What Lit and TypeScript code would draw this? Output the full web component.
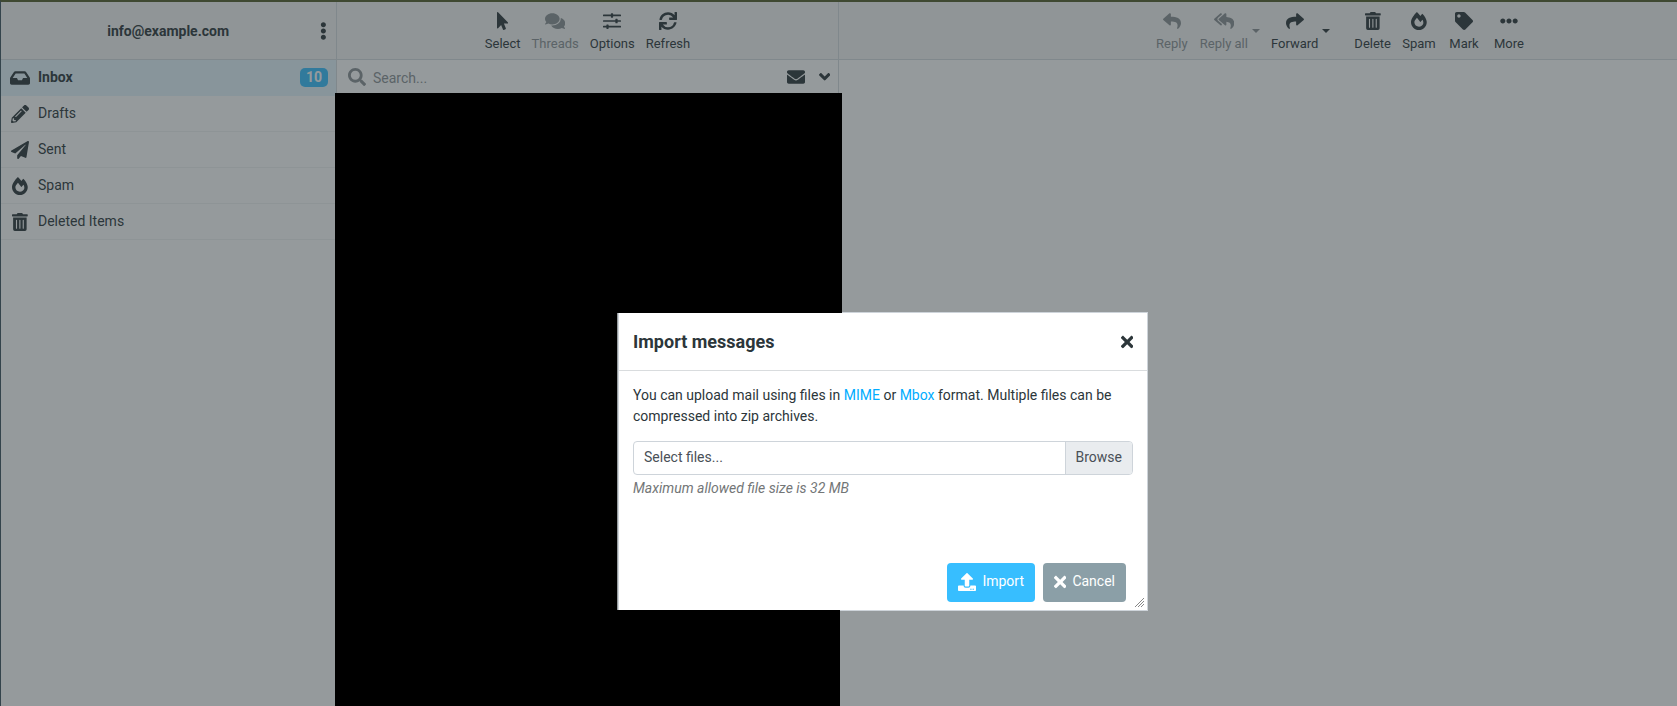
import { LitElement, html, css, svg } from "lit";
import { customElement, property, state } from "lit/decorators.js";
import { classMap } from "lit/directives/class-map.js";

interface Glyph {
  width: number;
  path: string;
}

const GLYPHS: Record<string, Glyph> = {
  pointer: {
    width: 320,
    path: "M302.189 329.126H196.105l55.831 135.993c3.889 9.428-.555 19.999-9.444 23.999l-49.165 21.427c-9.165 4-19.443-.571-23.332-9.714l-53.053-129.136-86.664 89.138C18.729 472.71 0 463.554 0 447.977V18.299C0 1.899 19.921-6.096 30.277 5.443l284.412 292.542c11.472 11.179 3.007 31.141-12.5 31.141z",
  },
  comments: {
    width: 576,
    path: "M416 192c0-88.4-93.1-160-208-160S0 103.6 0 192c0 34.3 14.1 65.9 38 92-13.4 30.2-35.5 54.2-35.8 54.5-2.2 2.3-2.8 5.7-1.5 8.7S4.8 352 8 352c36.6 0 66.9-12.3 88.7-25 32.2 15.7 70.3 25 111.3 25 114.9 0 208-71.6 208-160zm122 220c23.9-26 38-57.7 38-92 0-66.9-53.5-124.2-129.3-148.1.9 6.6 1.3 13.3 1.3 20.1 0 105.9-107.7 192-240 192-10.8 0-21.3-.8-31.7-1.9C207.8 439.6 281.8 480 368 480c41 0 79.1-9.2 111.3-25 21.8 12.7 52.1 25 88.7 25 3.2 0 6.1-1.9 7.3-4.8 1.3-2.9.7-6.3-1.5-8.7-.3-.3-22.4-24.2-35.8-54.5z",
  },
  sliders: {
    width: 512,
    path: "M16 72h208V48c0-9 7-16 16-16h32c9 0 16 7 16 16v24h208c9 0 16 7 16 16v16c0 9-7 16-16 16H288v24c0 9-7 16-16 16h-32c-9 0-16-7-16-16v-24H16c-9 0-16-7-16-16V88c0-9 7-16 16-16zM16 232h336v-24c0-9 7-16 16-16h32c9 0 16 7 16 16v24h80c9 0 16 7 16 16v16c0 9-7 16-16 16h-80v24c0 9-7 16-16 16h-32c-9 0-16-7-16-16v-24H16c-9 0-16-7-16-16v-16c0-9 7-16 16-16zM16 392h80v-24c0-9 7-16 16-16h32c9 0 16 7 16 16v24h336c9 0 16 7 16 16v16c0 9-7 16-16 16H160v24c0 9-7 16-16 16h-32c-9 0-16-7-16-16v-24H16c-9 0-16-7-16-16v-16c0-9 7-16 16-16z",
  },
  sync: {
    width: 512,
    path: "M440.65 12.57l4 82.77A247.16 247.16 0 0 0 255.83 8C134.73 8 33.91 94.92 12.29 209.82A12 12 0 0 0 24.09 224h49.05a12 12 0 0 0 11.67-9.26 175.91 175.91 0 0 1 317-56.94l-101.46-4.86a12 12 0 0 0-12.57 12v47.41a12 12 0 0 0 12 12H500a12 12 0 0 0 12-12V12a12 12 0 0 0-12-12h-47.37a12 12 0 0 0-11.98 12.57zM255.83 432a175.61 175.61 0 0 1-146-77.8l101.8 4.87a12 12 0 0 0 12.57-12v-47.4a12 12 0 0 0-12-12H12a12 12 0 0 0-12 12V500a12 12 0 0 0 12 12h47.35a12 12 0 0 0 12-12.6l-4.15-82.57A247.17 247.17 0 0 0 255.83 504c121.11 0 221.93-86.92 243.55-201.82a12 12 0 0 0-11.8-14.18h-49.05a12 12 0 0 0-11.67 9.26A175.86 175.86 0 0 1 255.83 432z",
  },
  inbox: {
    width: 576,
    path: "M567.938 243.908L462.25 85.374A48.003 48.003 0 0 0 422.311 64H153.689a48 48 0 0 0-39.938 21.374L8.062 243.908A47.994 47.994 0 0 0 0 270.533V400c0 26.51 21.49 48 48 48h480c26.51 0 48-21.49 48-48V270.533a47.994 47.994 0 0 0-8.062-26.625zM162.252 128h251.497l85.333 128H376l-32 64H232l-32-64H76.918l85.334-128z",
  },
  pencil: {
    width: 512,
    path: "M497.9 142.1l-46.1 46.1c-4.7 4.7-12.3 4.7-17 0l-111-111c-4.7-4.7-4.7-12.3 0-17l46.1-46.1c18.7-18.7 49.1-18.7 67.9 0l60.1 60.1c18.8 18.7 18.8 49.1 0 67.9zM284.2 99.8L21.6 362.4.4 483.9c-2.9 16.4 11.4 30.6 27.8 27.8l121.5-21.3 262.6-262.6c4.7-4.7 4.7-12.3 0-17l-111-111c-4.8-4.7-12.4-4.7-17.1 0zM124.1 339.9c-5.5-5.5-5.5-14.3 0-19.8l154-154c5.5-5.5 14.3-5.5 19.8 0s5.5 14.3 0 19.8l-154 154c-5.5 5.5-14.3 5.5-19.8 0zM88 424h48v36.3l-64.5 11.3-31.1-31.1L51.7 376H88v48z",
  },
  plane: {
    width: 512,
    path: "M476 3.2L12.5 270.6c-18.1 10.4-15.8 35.6 2.2 43.2L121 358.4l287.3-253.2c5.5-4.9 13.3 2.6 8.6 8.3L176 407v80.5c0 23.6 28.5 32.9 42.5 15.8L282 426l124.6 52.2c14.2 6 30.4-2.9 33-18.2l72-432C515 7.8 493.3-6.8 476 3.2z",
  },
  fire: {
    width: 448,
    path: "M323.56 51.2c-20.8 19.3-39.58 39.59-56.22 59.97C240.08 73.62 206.28 35.53 168 0 69.74 91.17 0 209.96 0 281.6 0 408.85 100.29 512 224 512s224-103.15 224-230.4c0-53.27-51.98-163.14-124.44-230.4zm-19.47 340.65C282.43 407.01 255.72 416 226.86 416 154.71 416 96 368.26 96 290.75c0-38.61 24.31-72.63 72.79-130.75 6.93 7.98 98.83 125.34 98.83 125.34l58.63-66.88c4.14 6.85 7.91 13.55 11.27 19.97 27.35 52.19 15.81 118.97-33.43 153.42z",
  },
  trash: {
    width: 448,
    path: "M32 464a48 48 0 0 0 48 48h288a48 48 0 0 0 48-48V128H32zm272-256a16 16 0 0 1 32 0v224a16 16 0 0 1-32 0zm-96 0a16 16 0 0 1 32 0v224a16 16 0 0 1-32 0zm-96 0a16 16 0 0 1 32 0v224a16 16 0 0 1-32 0zM432 32H312l-9.4-18.7A24 24 0 0 0 281.1 0H166.8a23.72 23.72 0 0 0-21.4 13.3L136 32H16A16 16 0 0 0 0 48v32a16 16 0 0 0 16 16h416a16 16 0 0 0 16-16V48a16 16 0 0 0-16-16z",
  },
  search: {
    width: 512,
    path: "M505 442.7L405.3 343c-4.5-4.5-10.6-7-17-7H372c27.6-35.3 44-79.7 44-128C416 93.1 322.9 0 208 0S0 93.1 0 208s93.1 208 208 208c48.3 0 92.7-16.4 128-44v16.3c0 6.4 2.5 12.5 7 17l99.7 99.7c9.4 9.4 24.6 9.4 33.9 0l28.3-28.3c9.4-9.4 9.4-24.6.1-34zM208 336c-70.7 0-128-57.2-128-128 0-70.7 57.2-128 128-128 70.7 0 128 57.2 128 128 0 70.7-57.2 128-128 128z",
  },
  envelope: {
    width: 512,
    path: "M502.3 190.8c3.9-3.1 9.7-.2 9.7 4.7V400c0 26.5-21.5 48-48 48H48c-26.5 0-48-21.5-48-48V195.6c0-5 5.7-7.8 9.7-4.7 22.4 17.4 52.1 39.5 154.1 113.6 21.1 15.4 56.7 47.8 92.2 47.6 35.7.3 72-32.8 92.3-47.6 102-74.1 131.6-96.3 154-113.7zM256 320c23.2.4 56.6-29.2 73.4-41.4 132.7-96.3 142.8-104.7 173.4-128.7 5.8-4.5 9.2-11.5 9.2-18.9v-19c0-26.5-21.5-48-48-48H48c-26.5 0-48 21.5-48 48v19c0 7.4 3.4 14.3 9.2 18.9 30.6 23.9 40.7 32.4 173.4 128.7 16.8 12.2 50.2 41.8 73.4 41.4z",
  },
  chevron: {
    width: 448,
    path: "M193 396L10 213c-13-13-13-33 0-46l40-40c13-13 33-13 46 0l128 128 128-128c13-13 33-13 46 0l40 40c13 13 13 33 0 46L255 396c-17 17-45 17-62 0z",
  },
  reply: {
    width: 512,
    path: "M8.309 189.836L184.313 37.851C199.719 24.546 224 35.347 224 56.015v80.053c160.629 1.839 288 34.032 288 186.258 0 61.441-39.581 122.309-83.333 154.132-13.653 9.931-33.111-2.533-28.077-18.631 45.344-145.012-21.507-183.51-176.59-185.742V360c0 20.7-24.3 31.453-39.687 18.164l-176.004-152c-11.071-9.562-11.086-26.753 0-36.328z",
  },
  replyAll: {
    width: 576,
    path: "M136.309 189.836L312.313 37.851C327.72 24.546 352 35.348 352 56.015v82.763c129.182 10.231 224 52.212 224 183.548 0 61.441-39.582 122.309-83.333 154.132-13.653 9.931-33.111-2.533-28.077-18.631 38.512-123.162-3.922-169.482-112.59-182.015v84.175c0 20.701-24.3 31.453-39.687 18.164L136.309 226.164c-11.071-9.561-11.086-26.753 0-36.328zm-128 36.328L184.313 378.15C199.7 391.439 224 380.687 224 359.986v-15.818l-108.606-93.785A55.96 55.96 0 0 1 96 207.998a55.953 55.953 0 0 1 19.393-42.38L224 71.832V56.015c0-20.667-24.28-31.469-39.687-18.164L8.309 189.836c-11.086 9.575-11.071 26.767 0 36.328z",
  },
  forward: {
    width: 512,
    path: "M503.691 189.836L327.687 37.851C312.281 24.546 288 35.347 288 56.015v80.053C127.371 137.907 0 170.1 0 322.326c0 61.441 39.581 122.309 83.333 154.132 13.653 9.931 33.111-2.533 28.077-18.631C66.066 312.814 132.917 274.316 288 272.085V360c0 20.7 24.3 31.453 39.687 18.164l176.004-152c11.071-9.562 11.086-26.753 0-36.328z",
  },
  tag: {
    width: 512,
    path: "M0 252.118V48C0 21.49 21.49 0 48 0h204.118a48 48 0 0 1 33.941 14.059l211.882 211.882c18.745 18.745 18.745 49.137 0 67.882L293.823 497.941c-18.745 18.745-49.137 18.745-67.882 0L14.059 286.059A48 48 0 0 1 0 252.118zM112 64c-26.51 0-48 21.49-48 48s21.49 48 48 48 48-21.49 48-48-21.49-48-48-48z",
  },
  dots: {
    width: 512,
    path: "M328 256c0 39.8-32.2 72-72 72s-72-32.2-72-72 32.2-72 72-72 72 32.2 72 72zm104-72c-39.8 0-72 32.2-72 72s32.2 72 72 72 72-32.2 72-72-32.2-72-72-72zm-352 0c-39.8 0-72 32.2-72 72s32.2 72 72 72 72-32.2 72-72-32.2-72-72-72z",
  },
  dotsVertical: {
    width: 192,
    path: "M96 184c39.8 0 72 32.2 72 72s-32.2 72-72 72-72-32.2-72-72 32.2-72 72-72zM24 80c0 39.8 32.2 72 72 72s72-32.2 72-72S135.8 8 96 8 24 40.2 24 80zm0 352c0 39.8 32.2 72 72 72s72-32.2 72-72-32.2-72-72-72-72 32.2-72 72z",
  },
  upload: {
    width: 512,
    path: "M296 384h-80c-13.3 0-24-10.7-24-24V192h-87.7c-17.8 0-26.7-21.5-14.1-34.1L242.3 5.7c7.5-7.5 19.8-7.5 27.3 0l152.2 152.2c12.6 12.6 3.7 34.1-14.1 34.1H320v168c0 13.3-10.7 24-24 24zm216-8v112c0 13.3-10.7 24-24 24H24c-13.3 0-24-10.7-24-24V376c0-13.3 10.7-24 24-24h136v8c0 30.9 25.1 56 56 56h80c30.9 0 56-25.1 56-56v-8h136c13.3 0 24 10.7 24 24zm-124 88c0-11-9-20-20-20s-20 9-20 20 9 20 20 20 20-9 20-20zm64 0c0-11-9-20-20-20s-20 9-20 20 9 20 20 20 20-9 20-20z",
  },
  times: {
    width: 352,
    path: "M242.72 256l100.07-100.07c12.28-12.28 12.28-32.19 0-44.48l-22.24-22.24c-12.28-12.28-32.19-12.28-44.48 0L176 189.28 75.93 89.21c-12.28-12.28-32.19-12.28-44.48 0L9.21 111.45c-12.28 12.28-12.28 32.19 0 44.48L109.28 256 9.21 356.07c-12.28 12.28-12.28 32.19 0 44.48l22.24 22.24c12.28 12.28 32.2 12.28 44.48 0L176 322.72l100.07 100.07c12.28 12.28 32.2 12.28 44.48 0l22.24-22.24c12.28-12.28 12.28-32.19 0-44.48L242.72 256z",
  },
};

/** Solid glyph that takes its height from font-size and its colour from the text. */
@customElement("mail-icon")
export class MailIcon extends LitElement {
  @property() name = "inbox";

  static styles = css`
    :host {
      display: inline-flex;
      justify-content: center;
      font-size: 18px;
    }
    .glyph {
      display: block;
      height: 1em;
      fill: currentColor;
    }
  `;

  render() {
    const glyph = GLYPHS[this.name];
    return html`<svg class="glyph" viewBox="0 0 ${glyph.width} 512" aria-hidden="true">
      ${svg`<path d=${glyph.path}></path>`}
    </svg>`;
  }
}

interface Action {
  label: string;
  icon: string;
  disabled?: boolean;
  menu?: boolean;
  spaced?: boolean;
}

@customElement("mail-toolbar")
export class MailToolbar extends LitElement {
  @property({ attribute: false }) actions: Action[] = [];

  static styles = css`
    :host {
      display: flex;
      gap: 11px;
    }
    .item {
      display: flex;
      gap: 4px;
    }
    .item.spaced {
      margin-left: 13px;
    }
    button {
      border: 0;
      padding: 0;
      background: none;
      color: #2c363a;
      font: 13px/18px Roboto, sans-serif;
    }
    button:disabled {
      color: #8b9194;
    }
    .action {
      display: flex;
      flex-direction: column;
      align-items: center;
      gap: 5px;
      min-width: 34px;
    }
    .more {
      display: flex;
      padding-top: 17px;
      align-items: flex-start;
    }
    .caret {
      display: block;
      width: 8px;
      height: 4px;
      fill: currentColor;
    }
  `;

  render() {
    return this.actions.map(
      (a) => html`<div class=${classMap({ item: true, spaced: !!a.spaced })}>
        <button class="action" type="button" ?disabled=${!!a.disabled}>
          <mail-icon name=${a.icon}></mail-icon>
          <span>${a.label}</span>
        </button>
        ${a.menu
          ? html`<button class="more" type="button" aria-label="${a.label} options" ?disabled=${!!a.disabled}>
              <svg class="caret" viewBox="0 0 8 4"><path d="M0 0h8L4 4z"></path></svg>
            </button>`
          : null}
      </div>`
    );
  }
}

@customElement("import-dialog")
export class ImportDialog extends LitElement {
  @state() private fileName = "";

  static styles = css`
    :host {
      display: flex;
      flex-direction: column;
      box-sizing: border-box;
      border: 1px solid #ced4da;
      background: #fff;
      color: #2c363a;
      font: 14px/21px Roboto, sans-serif;
    }
    header {
      display: flex;
      align-items: center;
      justify-content: space-between;
      height: 57px;
      padding: 0 14px;
      border-bottom: 1px solid #d9dcde;
    }
    h2 {
      margin: 0;
      font-size: 18px;
      font-weight: 700;
    }
    button {
      display: flex;
      align-items: center;
      border: 0;
      font: inherit;
      color: inherit;
    }
    .close {
      padding: 0;
      background: none;
    }
    .body {
      flex: 1;
      padding: 14px 14px 0;
    }
    p {
      margin: 0 0 14px;
    }
    a {
      color: #00acff;
      text-decoration: none;
    }
    .picker {
      position: relative;
      display: flex;
      height: 32px;
      border: 1px solid #ced4da;
      border-radius: 4px;
      line-height: 31px;
      color: #495057;
      overflow: hidden;
    }
    .picker-name {
      flex: 1;
      padding: 0 10px;
    }
    .picker-browse {
      padding: 0 10px;
      border-left: 1px solid #ced4da;
      background: #e9ecef;
    }
    .picker-input {
      position: absolute;
      inset: 0;
      width: 100%;
      opacity: 0;
    }
    .hint {
      margin-top: 3px;
      font-style: italic;
      color: #737677;
    }
    footer {
      display: flex;
      justify-content: flex-end;
      gap: 8px;
      padding: 0 21px 8px;
    }
    .primary,
    .secondary {
      height: 39px;
      gap: 6px;
      padding: 0 11px 2px;
      border-radius: 4px;
      color: #fff;
    }
    .primary {
      background: #37beff;
    }
    .secondary {
      background: #8b9fa7;
    }
    .grip {
      position: absolute;
      right: 3px;
      bottom: 3px;
      width: 9px;
      height: 9px;
      stroke: #888;
    }
  `;

  private pick(e: Event) {
    this.fileName = (e.target as HTMLInputElement).files?.[0]?.name ?? "";
  }

  render() {
    return html`
      <header>
        <h2>Import messages</h2>
        <button class="close" type="button" aria-label="Close"><mail-icon name="times"></mail-icon></button>
      </header>
      <div class="body">
        <p>
          You can upload mail using files in <a href="#mime">MIME</a> or <a href="#mbox">Mbox</a> format. Multiple files
          can be compressed into zip archives.
        </p>
        <label class="picker">
          <span class="picker-name">${this.fileName || "Select files..."}</span>
          <span class="picker-browse">Browse</span>
          <input class="picker-input" type="file" @change=${this.pick} />
        </label>
        <div class="hint">Maximum allowed file size is 32 MB</div>
      </div>
      <footer>
        <button class="primary" type="button"><mail-icon name="upload"></mail-icon>Import</button>
        <button class="secondary" type="button"><mail-icon name="times"></mail-icon>Cancel</button>
      </footer>
      <svg class="grip" viewBox="0 0 9 9"><path d="M0 9L9 0M3 9L9 3M6 9L9 6"></path></svg>
    `;
  }
}

const FOLDERS = [
  { label: "Inbox", icon: "inbox", unread: 10 },
  { label: "Drafts", icon: "pencil", unread: 0 },
  { label: "Sent", icon: "plane", unread: 0 },
  { label: "Spam", icon: "fire", unread: 0 },
  { label: "Deleted Items", icon: "trash", unread: 0 },
];

const LIST_ACTIONS: Action[] = [
  { label: "Select", icon: "pointer" },
  { label: "Threads", icon: "comments", disabled: true },
  { label: "Options", icon: "sliders" },
  { label: "Refresh", icon: "sync" },
];

const MESSAGE_ACTIONS: Action[] = [
  { label: "Reply", icon: "reply", disabled: true },
  { label: "Reply all", icon: "replyAll", disabled: true, menu: true },
  { label: "Forward", icon: "forward", menu: true },
  { label: "Delete", icon: "trash", spaced: true },
  { label: "Spam", icon: "fire" },
  { label: "Mark", icon: "tag" },
  { label: "More", icon: "dots" },
];

@customElement("app-root")
export class AppRoot extends LitElement {
  @state() private selected = "Inbox";

  static styles = css`
    :host {
      display: block;
      position: relative;
      height: 100vh;
      overflow: hidden;
      background: #fff;
      color: #2c363a;
      font: 14px/21px Roboto, sans-serif;
    }
    .layout {
      display: grid;
      grid-template-columns: 336px 502px 1fr;
      box-sizing: border-box;
      height: 100%;
      border-top: 2px solid #3f4932;
      border-left: 1px solid #34444c;
    }
    .column {
      display: flex;
      flex-direction: column;
      min-width: 0;
      border-right: 1px solid #d4dbde;
    }
    .column:last-child {
      border-right: 0;
    }
    .head {
      display: flex;
      flex: none;
      box-sizing: border-box;
      height: 58px;
      justify-content: center;
      border-bottom: 1px solid #d4dbde;
      background: #f4f4f4;
    }
    .head mail-toolbar {
      padding-top: 10px;
    }
    .head.message {
      justify-content: flex-end;
      padding-right: 151px;
    }
    .account {
      align-items: center;
      padding: 0 9px 0 7px;
    }
    .account-name {
      flex: 1;
      padding: 2px 0 0 8px;
      text-align: center;
      font-weight: 700;
    }
    button {
      display: flex;
      border: 0;
      padding: 0;
      background: none;
      color: inherit;
    }
    .folders {
      margin: 0;
      padding: 0;
      list-style: none;
    }
    .folder {
      display: flex;
      align-items: center;
      box-sizing: border-box;
      height: 36px;
      padding: 0 8px 0 9px;
      gap: 8px;
      border-bottom: 1px solid #f0f2f3;
      color: inherit;
      text-decoration: none;
    }
    .folder.selected {
      background: #e4f4fc;
      border-bottom-color: #e4f4fc;
      font-weight: 700;
    }
    .folder mail-icon {
      width: 20px;
    }
    .folder-name {
      flex: 1;
    }
    .badge {
      padding: 0 6px;
      border-radius: 5px;
      background: #37beff;
      color: #fff;
      line-height: 19px;
    }
    .search {
      display: flex;
      flex: none;
      align-items: center;
      height: 33px;
      padding: 0 8px 0 11px;
    }
    .search label {
      display: flex;
      color: #8b9194;
    }
    .search input {
      flex: 1;
      min-width: 0;
      padding: 3px 7px 0;
      border: 0;
      outline: 0;
      background: none;
      font: inherit;
      color: inherit;
    }
    .search input::placeholder {
      color: #8b9194;
      opacity: 1;
    }
    .search button + button {
      margin-left: 14px;
    }
    .search .expand {
      font-size: 13px;
    }
    /* Blacked-out message list: lies above the backdrop and frames the dialog. */
    .hidden-list {
      position: relative;
      z-index: 3;
      display: flex;
      flex: 1;
      flex-direction: column;
      margin: 0 -2px;
      pointer-events: none;
    }
    .block {
      background: #000;
    }
    .block.upper {
      height: 220px;
      margin-right: -2px;
    }
    .block.middle {
      height: 297px;
      width: 282px;
    }
    .block.lower {
      flex: 1;
    }
    .backdrop {
      position: absolute;
      inset: 2px 0 0 1px;
      z-index: 1;
      background: rgba(44, 54, 58, 0.5);
    }
    import-dialog {
      position: absolute;
      top: 312px;
      left: 618px;
      z-index: 2;
      width: 530px;
      height: 299px;
    }
  `;

  render() {
    return html`
      <div class="layout">
        <nav class="column">
          <div class="head account">
            <span class="account-name">info@example.com</span>
            <button type="button" aria-label="Folder actions"><mail-icon name="dotsVertical"></mail-icon></button>
          </div>
          <ul class="folders">
            ${FOLDERS.map(
              (f) => html`<li>
                <a
                  class=${classMap({ folder: true, selected: f.label === this.selected })}
                  href="#${f.icon}"
                  @click=${() => (this.selected = f.label)}
                >
                  <mail-icon name=${f.icon}></mail-icon>
                  <span class="folder-name">${f.label}</span>
                  ${f.unread ? html`<span class="badge">${f.unread}</span>` : null}
                </a>
              </li>`
            )}
          </ul>
        </nav>
        <section class="column">
          <div class="head"><mail-toolbar .actions=${LIST_ACTIONS}></mail-toolbar></div>
          <div class="search">
            <label for="query" aria-label="Search"><mail-icon name="search"></mail-icon></label>
            <input id="query" type="text" placeholder="Search..." />
            <button type="button" aria-label="Unread only"><mail-icon name="envelope"></mail-icon></button>
            <button type="button" aria-label="Search options">
              <mail-icon class="expand" name="chevron"></mail-icon>
            </button>
          </div>
          <div class="hidden-list">
            <div class="block upper"></div>
            <div class="block middle"></div>
            <div class="block lower"></div>
          </div>
        </section>
        <main class="column">
          <div class="head message"><mail-toolbar .actions=${MESSAGE_ACTIONS}></mail-toolbar></div>
        </main>
      </div>
      <div class="backdrop"></div>
      <import-dialog role="dialog" aria-label="Import messages"></import-dialog>
    `;
  }
}
